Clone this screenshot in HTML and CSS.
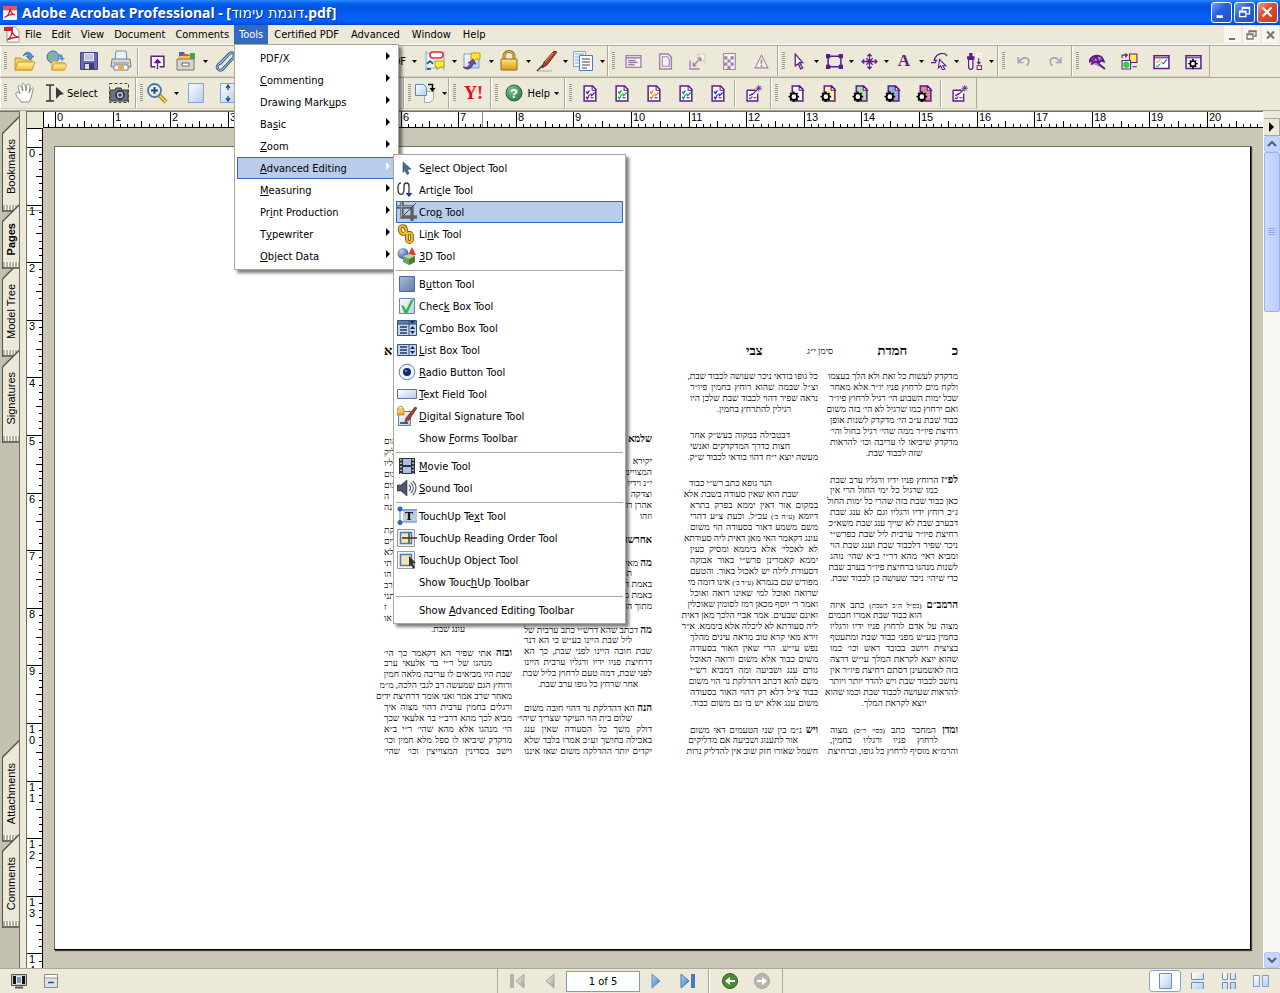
FILE: index.html
```
<!DOCTYPE html>
<html lang="en">
<head>
    <meta charset="UTF-8">
    <meta name="viewport" content="width=device-width, initial-scale=1.0">
    <title>Adobe Acrobat Professional - [דוגמת עימוד.pdf]</title>
    <link rel="stylesheet" href="styles.css">
</head>
<body>
    <!-- Shared icons -->
    <svg class="sprite" aria-hidden="true">
        <defs>
            <linearGradient id="gFolder" x1="0" y1="0" x2="0" y2="1"><stop offset="0" stop-color="#fff3a8"/><stop offset="1" stop-color="#f2bf3a"/></linearGradient>
            <linearGradient id="gBlue" x1="0" y1="0" x2="1" y2="1"><stop offset="0" stop-color="#fff"/><stop offset="1" stop-color="#b4cdec"/></linearGradient>
            <linearGradient id="gSteel" x1="0" y1="0" x2="1" y2="1"><stop offset="0" stop-color="#a9bddb"/><stop offset="1" stop-color="#5f7ca8"/></linearGradient>
            <linearGradient id="gGold" x1="0" y1="0" x2="0" y2="1"><stop offset="0" stop-color="#ffe683"/><stop offset="1" stop-color="#d99b12"/></linearGradient>
            <linearGradient id="gGray" x1="0" y1="0" x2="1" y2="1"><stop offset="0" stop-color="#f2f2ee"/><stop offset="1" stop-color="#a3a39c"/></linearGradient>
            <linearGradient id="gNav" x1="0" y1="0" x2="1" y2="1"><stop offset="0" stop-color="#b9daf5"/><stop offset="1" stop-color="#2f78bd"/></linearGradient>
            <radialGradient id="gBall" cx=".35" cy=".3" r=".8"><stop offset="0" stop-color="#b8cdf0"/><stop offset="1" stop-color="#2a4f94"/></radialGradient>
            <radialGradient id="gGreen" cx=".35" cy=".3" r=".8"><stop offset="0" stop-color="#7fc38c"/><stop offset="1" stop-color="#2c7440"/></radialGradient>
        </defs>
        <symbol id="folder" viewBox="0 0 22 22">
            <path d="M1 8h6l2 2h9v10H1z" fill="#f3cf5c" stroke="#c79a2c"/>
            <path d="M1 20l3-8h17l-3 8z" fill="url(#gFolder)" stroke="#c79a2c"/>
        </symbol>
        <symbol id="doccheck" viewBox="0 0 16 16">
            <path d="M2 1h8l3 3v11H2z" fill="#fff" stroke="#5c1a8e" stroke-width="1.4"/>
            <path d="M9.500 1v4h4" fill="none" stroke="#5c1a8e"/>
            <path d="M4 6l1 2 2-3M4 11l1 2 2-4M8 8l1 2 3-3" fill="none" stroke="currentColor" stroke-width="1.3"/>
            <path d="M8 12h3" stroke="#5c1a8e"/>
        </symbol>
        <symbol id="docgear" viewBox="0 0 16 16">
            <path d="M4 1h7l3 3v11H4z" fill="currentColor" stroke="#5c1a8e" stroke-width="1.4"/>
            <path d="M10.500 1v4h4z" fill="#fff" stroke="#5c1a8e"/>
            <circle cx="5.500" cy="11" r="3" fill="#fff" stroke="#000" stroke-width="1.600"/>
            <path d="M5.500 6v2M5.500 14v2M.5 11h2M8.500 11h2M2 7.500l1 1M9 7.500l-1 1M2 14.500l1-1M9 14.500l-1-1" stroke="#000" stroke-width="1.600"/>
        </symbol>
        <symbol id="down" viewBox="0 0 5 3"><path d="M0 0h5L2.500 3z"/></symbol>
        <symbol id="magic" viewBox="0 0 16 16">
            <path d="M1 5h8M11 8v7H1V5" fill="#fff" stroke="#5c1a8e" stroke-width="1.300"/>
            <path d="M3 9l1 1 2-2M3 12l1 1 2-2M7 12h3M6 9l5-5" fill="none" stroke="#5c1a8e"/>
            <path d="M12 0v6M9 3h6M10 1l4 4M14 1l-4 4" stroke="#5c1a8e" stroke-width=".8"/>
        </symbol>
    </svg>

    <header class="titlebar">
        <svg class="app-icon" viewBox="0 0 16 16"><rect width="16" height="16" rx="1" fill="#f6f3f6"/><path d="M0 0h16v5H0z" fill="#dc5a63"/><path d="M2 13c4-2 6-6 6-10 1 5 3 7 6 7-4-1-8 0-12 3z" fill="none" stroke="#c4202c" stroke-width="1.400"/></svg>
        <h1>Adobe Acrobat Professional - [<span dir="rtl">דוגמת עימוד</span>.pdf]</h1>
        <div class="window-buttons">
            <button aria-label="Minimize"><svg viewBox="0 0 21 21"><path d="M5 15h7" stroke="#fff" stroke-width="3"/></svg></button>
            <button aria-label="Restore"><svg viewBox="0 0 21 21"><path d="M8 8V5h8v7h-3M8 6h8M5 9h7v6H5zM5 10h7" fill="none" stroke="#fff" stroke-width="1.500"/></svg></button>
            <button class="close" aria-label="Close"><svg viewBox="0 0 21 21"><path d="M5 5l10 10M15 5L5 15" stroke="#fff" stroke-width="2.300"/></svg></button>
        </div>
    </header>

    <nav class="menubar">
        <svg class="doc-icon" viewBox="0 0 16 17"><path d="M3 1h8l4 4v11H3z" fill="#fff" stroke="#999"/><path d="M0 1h9v4H0z" fill="#d3202a"/><path d="M3 14c4-2 5-5 5-9 1 4 3 6 7 6-5 0-8 1-12 3z" fill="none" stroke="#d3202a" stroke-width="1.300"/></svg>
        <ul class="menus">
            <li><button>File</button></li>
            <li><button>Edit</button></li>
            <li><button>View</button></li>
            <li><button>Document</button></li>
            <li><button>Comments</button></li>
            <li class="open"><button>Tools</button>
                <ul class="menu tools-menu">
                    <li><button>PDF/X</button></li>
                    <li><button><u>C</u>ommenting</button></li>
                    <li><button>Drawing Mark<u>u</u>ps</button></li>
                    <li><button>Ba<u>s</u>ic</button></li>
                    <li><button><u>Z</u>oom</button></li>
                    <li class="selected"><button><u>A</u>dvanced Editing</button>
                        <ul class="menu submenu">
                            <li><button><svg viewBox="0 0 20 20"><path d="M6 4l8 7-4 .500 2 4-2 1-2-4-2 2z" fill="#3f6f96" stroke="#26455f" stroke-width=".6"/></svg><span>S<u>e</u>lect Object Tool</span></button></li>
                            <li><button><svg viewBox="0 0 20 20"><path d="M4 3C1 3 1 6 1 9c0 7 6 7 6 1V6c0-4 5-4 5 0v8" fill="none" stroke="#333" stroke-width="1.300"/><path d="M8.500 13h7L12 17z" fill="#1f3a9c"/></svg><span>Arti<u>c</u>le Tool</span></button></li>
                            <li class="selected"><button><svg viewBox="0 0 20 20"><path d="M0 5h15v14M5 0v15h15" fill="none" stroke="#5b6068" stroke-width="3.400"/><path d="M0 4.500h15.500M4.500 0v15" stroke="#a4a8ae" fill="none"/><path d="M7 13l12-12" stroke="#444" stroke-width="1"/></svg><span>Cro<u>p</u> Tool</span></button></li>
                            <li><button><svg viewBox="0 0 20 20"><g fill="none"><g stroke="#7d5700" stroke-width="3.800"><rect x="3" y="2" width="6" height="8" rx="3" transform="rotate(-20 6 6)"/><rect x="10" y="9" width="5" height="9" rx="2.500"/></g><g stroke="#f2bd2b" stroke-width="2"><rect x="3" y="2" width="6" height="8" rx="3" transform="rotate(-20 6 6)"/><rect x="10" y="9" width="5" height="9" rx="2.500"/></g><path d="M7 8l4 2" stroke="#f2bd2b" stroke-width="2.500"/></g></svg><span>Li<u>n</u>k Tool</span></button></li>
                            <li><button><svg viewBox="0 0 20 20"><path d="M15 1l4 8h-8z" fill="#e23b2e"/><circle cx="6" cy="7.500" r="5.500" fill="url(#gBall)"/><path d="M6 10l7-2 5 2v6l-6 3-6-3z" fill="#6f9f5c"/><path d="M6 10l7-2 5 2-6 3z" fill="#b5d69e"/><path d="M12 13v6l6-3v-6z" fill="#4c7b3d"/></svg><span><u>3</u>D Tool</span></button></li>
                            <li class="line" role="separator"></li>
                            <li><button><svg viewBox="0 0 20 20"><path d="M2.500 2.500h15v15h-15z" fill="url(#gSteel)" stroke="#4d6a94"/></svg><span>B<u>u</u>tton Tool</span></button></li>
                            <li><button><svg viewBox="0 0 20 20"><path d="M2.500 2.500h15v15h-15z" fill="url(#gBlue)" stroke="#6b87ad"/><path d="M4 9l3 1 2 4 5-10 3-1-7 15H8z" fill="#35b53c"/></svg><span>Chec<u>k</u> Box Tool</span></button></li>
                            <li><button><svg viewBox="0 0 20 20"><path d="M.5 2.500h19v15H.5z" fill="#c4d6ee" stroke="#32527f"/><path d="M1 3h18v3H1z" fill="#5f7fac"/><path d="M13 3h5l-2.500 3z" fill="#13294d"/><path d="M12 3v14M1 6h18" stroke="#32527f"/><path d="M3 9h7M3 12h7M3 15h7" stroke="#1e3a66" stroke-width="1.300"/><path d="M13 11l2.500-3 2.500 3zM13 13h5l-2.500 3z" fill="#13294d"/></svg><span>C<u>o</u>mbo Box Tool</span></button></li>
                            <li><button><svg viewBox="0 0 20 20"><path d="M.5 4.500h19v11H.5z" fill="#c4d6ee" stroke="#32527f"/><path d="M12 5v10" stroke="#32527f"/><path d="M3 7h7M3 10h7M3 13h7" stroke="#1e3a66" stroke-width="1.300"/><path d="M13 9l2.500-3 2.500 3zM13 11h5l-2.500 3z" fill="#13294d"/></svg><span><u>L</u>ist Box Tool</span></button></li>
                            <li><button><svg viewBox="0 0 20 20"><circle cx="10" cy="10" r="7.800" fill="#eef4fc" stroke="#6482b5"/><circle cx="10" cy="10" r="4" fill="#12277a"/><circle cx="9" cy="9" r="1.300" fill="#5f7fd0"/></svg><span><u>R</u>adio Button Tool</span></button></li>
                            <li><button><svg viewBox="0 0 20 20"><path d="M.5 5.500h19v9H.5z" fill="url(#gBlue)" stroke="#5f7694"/></svg><span><u>T</u>ext Field Tool</span></button></li>
                            <li><button><svg viewBox="0 0 20 20"><path d="M1.500 5.500h12v14h-12z" fill="url(#gBlue)" stroke="#4b83c9"/><path d="M1 3V2c0-2 5-2 5 0v2" fill="none" stroke="#a87b0c"/><path d="M0 3h7v6H0z" fill="url(#gGold)" stroke="#a87b0c" stroke-width=".6"/><path d="M18 1l2 1-8 12-4 2 1-4z" fill="#a8402a" stroke="#5f1c10" stroke-width=".6"/><path d="M3 17h8" stroke="#000" stroke-width="1.200"/></svg><span><u>D</u>igital Signature Tool</span></button></li>
                            <li><button class="plain">Show <u>F</u>orms Toolbar</button></li>
                            <li class="line" role="separator"></li>
                            <li><button><svg viewBox="0 0 20 20"><path d="M2 2h16v16H2z" fill="#30343a"/><path d="M6 3h8v6H6zM6 11h8v6H6z" fill="#a9c1e4"/><path d="M4 3v15M16 3v15" stroke="#ddd" stroke-width="1.500" stroke-dasharray="1.500 2"/></svg><span><u>M</u>ovie Tool</span></button></li>
                            <li><button><svg viewBox="0 0 20 20"><path d="M0 7h4l6-5v16l-6-5H0z" fill="#4d5468" stroke="#2b3040" stroke-width=".6"/><path d="M12 7c2 2 2 4 0 6M14 5c3 3 3 7 0 10M16 3c4 4 4 10 0 14" fill="none" stroke="#555b6b" stroke-width="1.200"/></svg><span><u>S</u>ound Tool</span></button></li>
                            <li class="line" role="separator"></li>
                            <li><button><svg viewBox="0 0 20 20"><path d="M6 3h14v13H6z" fill="#bccce4"/><path d="M3 2v15M2 4h18M2 16h18" stroke="#4e82cc"/><circle cx="3" cy="3" r="2.500" fill="#2f66bd"/><circle cx="3" cy="16.500" r="2.500" fill="#2f66bd"/><text x="8" y="14" class="t-glyph">T</text></svg><span>TouchUp Te<u>x</u>t Tool</span></button></li>
                            <li><button><svg viewBox="0 0 20 20"><path d="M.5 1.500h17v17H.5z" fill="#f4f4f2" stroke="#999"/><path d="M3.500 4.500h11v11h-11z" fill="#f7e6a4" stroke="#4b78c4" stroke-width="1.500"/><path d="M5 10h15M12 5v10" stroke="#333" stroke-width="1.300"/></svg><span>TouchUp Readin<u>g</u> Order Tool</span></button></li>
                            <li><button><svg viewBox="0 0 20 20"><path d="M.5 1.500h17v17H.5z" fill="#f4f4f2" stroke="#999"/><path d="M3.500 4.500h11v11h-11z" fill="#f7e6a4" stroke="#4b78c4" stroke-width="1.500"/><path d="M12 6l7 7-3 .500 2 4-2 1-2-4-2 2z" fill="#333"/></svg><span>TouchUp Ob<u>j</u>ect Tool</span></button></li>
                            <li><button class="plain">Show Touc<u>h</u>Up Toolbar</button></li>
                            <li class="line" role="separator"></li>
                            <li><button class="plain">Show <u>A</u>dvanced Editing Toolbar</button></li>
                        </ul>
                    </li>
                    <li><button><u>M</u>easuring</button></li>
                    <li><button>Pr<u>i</u>nt Production</button></li>
                    <li><button>T<u>y</u>pewriter</button></li>
                    <li><button><u>O</u>bject Data</button></li>
                </ul>
            </li>
            <li><button>Certified PDF</button></li>
            <li><button>Advanced</button></li>
            <li><button>Window</button></li>
            <li><button>Help</button></li>
        </ul>
        <div class="child-buttons">
            <button aria-label="Minimize document"><svg viewBox="0 0 16 16"><path d="M5 12h6" stroke="#77756a" stroke-width="2"/></svg></button>
            <button aria-label="Restore document"><svg viewBox="0 0 16 16"><path d="M6 6V4h7v5h-2M6 4.500h7M4 7h6v5H4zM4 7.500h6" fill="none" stroke="#77756a" stroke-width="1.300"/></svg></button>
            <button aria-label="Close document"><svg viewBox="0 0 16 16"><path d="M5 4.500l7 7M12 4.500l-7 7" stroke="#77756a" stroke-width="2"/></svg></button>
        </div>
    </nav>

    <section class="toolbars">
        <div class="toolbar-row">
            <div class="band file-band">
                <button aria-label="Open"><svg viewBox="0 0 22 22"><use href="#folder"/><path d="M9 6c2-5 8-5 9 0h2l-4 4-4-4h3c-1-2-3-2-6 0z" fill="#5b8fce" stroke="#2c5b96" stroke-width=".6"/></svg></button>
                <button aria-label="Open web page"><svg viewBox="0 0 22 22"><circle cx="7" cy="7" r="6" fill="#7fa8d8" stroke="#3d6a9f"/><path d="M3 4c3-2 4 2 3 4S2 9 2 7zM8 2l4 2-2 3z" fill="#7dbb72"/><g transform="translate(5 5) scale(.75)"><use href="#folder" width="22" height="22"/></g><path d="M12 5c3-2 5 0 5 3h2l-3 3-3-3h2z" fill="#5b8fce"/></svg></button>
                <button aria-label="Save"><svg viewBox="0 0 22 22"><path d="M2.500 2.500h17v17h-17z" fill="#6a6bb5" stroke="#44458c"/><path d="M6 3h10v8H6z" fill="#e3e6f5"/><path d="M7 5h8M7 7h8M7 9h8" stroke="#9ea3cc"/><path d="M6 13h10v6H6z" fill="#3c3d74"/><path d="M7 14h4v5H7z" fill="#d8d8e8"/></svg></button>
                <button aria-label="Print"><svg viewBox="0 0 22 22"><path d="M6 1h10l1 9H5z" fill="#eaf1fb" stroke="#7a8ca8"/><path d="M2 9h18l1 8H1z" fill="#d6d8dc" stroke="#777c86"/><path d="M3 13h16" stroke="#888"/><path d="M4 15h14v5H4z" fill="#fff" stroke="#777c86"/><path d="M8 16h6v3H8z" fill="#e9ad3a"/></svg></button>
                <span class="split"></span>
                <button aria-label="Upload"><svg class="small" viewBox="0 0 16 16"><path d="M6 13H2V3h12v10h-4" fill="#fff" stroke="#5c1a8e" stroke-width="1.400"/><path d="M8 15V7M5.500 9L8 6l2.500 3z" fill="#5c1a8e" stroke="#5c1a8e" stroke-width="1.200"/></svg></button>
                <button class="drop" aria-label="Organizer"><svg viewBox="0 0 22 22"><path d="M4 2h5l1 2h3v6H4z" fill="#3a68c8"/><path d="M8 4h5l1 1h5v5H8z" fill="#e4572e"/><path d="M3 6h14v4H3z" fill="#f5c73a"/><path d="M15 3h5v6h-5z" fill="#44a448"/><path d="M2 9h17v11H2z" fill="#d8d5c8" stroke="#77746a"/><path d="M7 13h7v3H7z" fill="#fff" stroke="#666"/></svg><svg class="arrow"><use href="#down"/></svg></button>
                <button aria-label="Attach"><svg viewBox="0 0 22 22"><path d="M5 14L14 4c3-3 7 1 4 4L8 19c-3 3-8-1-5-4L13 5" fill="none" stroke="#3c6291" stroke-width="2.800"/><path d="M5 14L14 4c3-3 7 1 4 4L8 19c-3 3-8-1-5-4L13 5" fill="none" stroke="#a9cdf0" stroke-width="1"/></svg></button>
                <button class="label-button create">Create PDF<svg class="arrow"><use href="#down"/></svg></button>
                <button class="drop" aria-label="Comment and markup"><svg viewBox="0 0 22 22"><path d="M3 3h16v16H3z" fill="#f1f6fd"/><path d="M2 1v20M20 1v20M2 3h18M2 12h18M2 18h18" stroke="#7fb1e6"/><rect x="6" y="2" width="13" height="6" rx="3" fill="#fff" stroke="#df3030" stroke-width="1.500"/><path d="M3 14l3-3 3 3M3 19h4" fill="none" stroke="#17406f" stroke-width="1.300"/><path d="M11 11h9v6h-4l-3 3v-3h-2z" fill="#ffe83c" stroke="#c79b00"/></svg><svg class="arrow"><use href="#down"/></svg></button>
                <button class="drop" aria-label="Send for review"><svg viewBox="0 0 22 22"><path d="M3 4h15v14H3z" fill="url(#gBlue)" stroke="#7c9bc6"/><path d="M10 3h9v6h-4l-3 3V9h-2z" fill="#ffe83c" stroke="#c79b00"/><path d="M2 17c4 1 7-1 7-4H7l5-4 3 5h-3c-1 5-6 7-10 3z" fill="#6b4b9c" stroke="#44266f" stroke-width=".6"/></svg><svg class="arrow"><use href="#down"/></svg></button>
                <button class="drop" aria-label="Secure"><svg viewBox="0 0 22 22"><path d="M6 10V6c0-6 10-6 10 0v4" fill="none" stroke="#98741a" stroke-width="3"/><path d="M6 10V6c0-6 10-6 10 0v4" fill="none" stroke="#e9c65a" stroke-width="1"/><path d="M3 9h16v11H3z" fill="url(#gGold)" stroke="#9a6f05"/></svg><svg class="arrow"><use href="#down"/></svg></button>
                <button class="drop" aria-label="Sign"><svg viewBox="0 0 22 22"><path d="M19 1l3 1-10 13-5 3 2-6z" fill="#b3402b" stroke="#571a0f" stroke-width=".8"/><path d="M8 15L2 21" stroke="#333" stroke-width="1.500"/><path d="M10 12L18 3" stroke="#e4937e"/><path d="M3 21h14" stroke="#aaa"/></svg><svg class="arrow"><use href="#down"/></svg></button>
                <button class="drop" aria-label="Forms"><svg viewBox="0 0 22 22"><path d="M1.500 1.500h12v15h-12z" fill="#edf4fc" stroke="#83a9d6"/><path d="M3 4h9M3 7h9M3 10h9M3 13h9" stroke="#83a9d6"/><path d="M7.500 5.500h13v15h-13z" fill="#fff" stroke="#4b7cb5"/><path d="M10 9h8M10 12h8M10 15h8M10 18h5" stroke="#444"/></svg><svg class="arrow"><use href="#down"/></svg></button>
            </div>
            <div class="band dim">
                <button aria-label="Output preview"><svg class="small" viewBox="0 0 16 16"><path d="M1 2.500h14v11H1z" fill="#fff" stroke="#5c1a8e" stroke-width="1.300"/><path d="M1 4.500h14M3 7h7M3 9h9M3 11h6" stroke="#5c1a8e" stroke-width="1.300"/></svg></button>
                <button aria-label="Page boxes"><svg class="small" viewBox="0 0 16 16"><path d="M2.500 1h8l3 3v11h-11z" fill="#fff" stroke="#5c1a8e" stroke-width="1.400"/><path d="M5 3.500h5l1.500 2v7H5z" fill="none" stroke="#5c1a8e"/></svg></button>
                <button aria-label="Scale"><svg class="small" viewBox="0 0 16 16"><path d="M8 1h7v8l-3-3z" fill="#fff" stroke="#b9b3a5"/><path d="M1 7v8h9M4 12l7-7M4 9v3h3M8 5h3v3" fill="none" stroke="#5c1a8e" stroke-width="1.300"/></svg></button>
                <button aria-label="Flatten"><svg class="small" viewBox="0 0 16 16"><path d="M2.500.5h11v15h-11z" fill="#fff" stroke="#5c1a8e"/><path d="M3 3h3v3h3V3h3v3h-3v3H6V6H3zM3 9h3v3h3V9h3v3H9v3H6v-3H3z" fill="#5c1a8e"/></svg></button>
                <button aria-label="Trap presets"><svg class="small" viewBox="0 0 16 16"><path d="M8 2l6 12H2z" fill="#fff" stroke="#5c1a8e"/><path d="M8 6v4M8 11v2" stroke="#333" stroke-width="1.500"/></svg></button>
            </div>
            <div class="band">
                <button class="drop" aria-label="Select object"><svg class="small" viewBox="0 0 16 16"><path d="M4 1l7 8H8l3 5-2 1-2-5-3 2z" fill="#fff" stroke="#5c1a8e" stroke-width="1.200"/></svg><svg class="arrow"><use href="#down"/></svg></button>
                <button class="drop" aria-label="Rectangle"><svg class="small" viewBox="0 0 16 16"><path d="M2 3h12v10H2z" fill="none" stroke="#5c1a8e" stroke-width="1.400"/><path d="M0 1h4v4H0zM12 1h4v4h-4zM0 11h4v4H0zM12 11h4v4h-4z" fill="#5c1a8e"/></svg><svg class="arrow"><use href="#down"/></svg></button>
                <button class="drop" aria-label="Move"><svg class="small" viewBox="0 0 16 16"><path d="M8 1v14M1 8h14M6 3l2-2 2 2M6 13l2 2 2-2M3 6L1 8l2 2M13 6l2 2-2 2M5 5l6 6M11 5l-6 6" fill="none" stroke="#5c1a8e" stroke-width="1.200"/></svg><svg class="arrow"><use href="#down"/></svg></button>
                <button class="drop" aria-label="Edit text"><span class="letter">A</span><svg class="arrow"><use href="#down"/></svg></button>
                <button class="drop" aria-label="Edit path"><svg class="small" viewBox="0 0 16 16"><path d="M0 9h4l1-2H3c2-8 11-8 12-4" fill="none" stroke="#5c1a8e" stroke-width="1.200"/><path d="M8 6l6 6h-3l2 3-2 1-2-4-2 2z" fill="#fff" stroke="#5c1a8e"/></svg><svg class="arrow"><use href="#down"/></svg></button>
                <button class="drop" aria-label="Eyedropper"><svg class="small" viewBox="0 0 16 16"><path d="M3 0h3v3h2v3H1V3h2z" fill="#5c1a8e"/><path d="M2.500 6h4v8l-2 2-2-2z" fill="#fff" stroke="#5c1a8e" stroke-width="1.200"/><path d="M12 5v5M10.500 8.500l1.500 2 1.500-2M10.500 12h4v3.500h-4z" fill="#fff" stroke="#5c1a8e"/><path d="M10.500.5h4v3h-4z" fill="none" stroke="#fff"/></svg><svg class="arrow"><use href="#down"/></svg></button>
            </div>
            <div class="band dim">
                <button aria-label="Undo"><svg class="small" viewBox="0 0 16 16"><path d="M4 8c3-5 9-4 9 0 0 2-1 3-2 4M3 4v5h5" fill="none" stroke="#77558e" stroke-width="1.500"/></svg></button>
                <button aria-label="Redo"><svg class="small" viewBox="0 0 16 16"><path d="M12 8C9 3 3 4 3 8c0 2 1 3 2 4M13 4v5H8" fill="none" stroke="#77558e" stroke-width="1.500"/></svg></button>
            </div>
            <div class="band last">
                <button aria-label="Inspect"><svg class="small" viewBox="0 0 16 16"><path d="M0 9C2 1 12 0 14 8l-3-1-2 3 6 5M2 8l5-5 2 6-4-1-3 3" fill="#b08bcc" stroke="#5c1a8e" stroke-width="1.800"/></svg></button>
                <button aria-label="Compare"><svg class="small" viewBox="0 0 16 16"><path d="M8 1h7v8H8z" fill="#ffee44" stroke="#5c1a8e"/><path d="M1 7h8v8H1z" fill="#fff" stroke="#5c1a8e"/><circle cx="5" cy="11" r="3" fill="#27d63a"/><path d="M1 5V2h5M4 .5L6 2 4 4M11 13h4" fill="none" stroke="#5c1a8e"/></svg></button>
                <button aria-label="Preflight"><svg class="small" viewBox="0 0 16 16"><path d="M1 2.500h14v12H1z" fill="#fff" stroke="#5c1a8e" stroke-width="1.400"/><path d="M1 4.500h14" stroke="#5c1a8e"/><path d="M3 8l1 1 3-3" fill="none" stroke="#f0a030"/><path d="M3 12l1 1 3-3" fill="none" stroke="#30b040"/><path d="M8 9l2 1 3-4" fill="none" stroke="#3050d0"/></svg></button>
                <button aria-label="Settings"><svg class="small" viewBox="0 0 16 16"><path d="M1 2.500h14v12H1z" fill="#fff" stroke="#5c1a8e" stroke-width="1.400"/><path d="M1 4.500h14" stroke="#5c1a8e"/><circle cx="7.500" cy="10" r="2.500" fill="#fff" stroke="#000" stroke-width="1.500"/><path d="M7.500 5.500v2M7.500 12v3M3 10h2M10 10h2M4.500 7l1 1M10.500 7l-1 1M4.500 13l1-1M10.500 13l-1-1" stroke="#000" stroke-width="1.400"/></svg></button>
            </div>
        </div>
        <div class="toolbar-row">
            <div class="band">
                <button aria-label="Hand"><svg viewBox="0 0 22 22"><path d="M7 20C5 17 1 13 2 11s3 0 4 1L4 5c0-2 2-2 3 0l2 4-1-6c0-2 2-2 3 0l1 6 1-6c1-2 3-1 3 1l-1 7 2-4c1-2 3-1 2 1l-2 8-2 4z" fill="#fff" stroke="#8b8b8b"/></svg></button>
                <button class="label-button select-tool"><svg viewBox="0 0 20 20"><path d="M1 2h3c1 0 1 1 1 1s0-1 1-1h3M5 3v14M1 18h3c1 0 1-1 1-1s0 1 1 1h3" fill="none" stroke="#333" stroke-width="1.500"/><path d="M11 4l8 7-4 1-4 4z" fill="#3b3b3b"/></svg>Select</button>
                <button aria-label="Snapshot"><svg viewBox="0 0 22 22"><path d="M1.500 1.500h19v19h-19z" fill="none" stroke="#444" stroke-dasharray="3 2"/><path d="M2 8h5l1-2h5l1 2h6v11H2z" fill="#70747c" stroke="#33363c"/><circle cx="12" cy="13" r="4" fill="#b9cbe6" stroke="#22252b" stroke-width="1.500"/><circle cx="12" cy="13" r="1.800" fill="#28436f"/></svg></button>
            </div>
            <div class="band zoom-band">
                <button class="drop" aria-label="Zoom in"><svg viewBox="0 0 22 22"><path d="M12 12l8 8" stroke="#b9871d" stroke-width="4"/><path d="M12 12l8 8" stroke="#ffd56d" stroke-width="1.500"/><circle cx="8.500" cy="8.500" r="6.500" fill="#e5f0fc" stroke="#4d78ad" stroke-width="1.800"/><path d="M5 8.500h7M8.500 5v7" stroke="#24497d" stroke-width="2"/></svg><svg class="arrow"><use href="#down"/></svg></button>
                <button aria-label="Actual size"><svg viewBox="0 0 22 22"><path d="M3.500 1.500h15v19h-15z" fill="url(#gBlue)" stroke="#7fa6d6"/></svg></button>
                <button aria-label="Fit page"><svg viewBox="0 0 22 22"><path d="M3.500 1.500h15v19h-15z" fill="url(#gBlue)" stroke="#7fa6d6"/><path d="M11 3v5M9 6l2-3 2 3M11 19v-5M9 16l2 3 2-3" fill="none" stroke="#24497d" stroke-width="1.300"/></svg></button>
            </div>
            <div class="band">
                <button class="drop" aria-label="Rotate"><svg viewBox="0 0 22 22"><path d="M10.500 9.500h9v8l-4 3h-5z" fill="#f5f5f2" stroke="#aaa"/><path d="M1.500 2.500h8l3 3v8h-11z" fill="url(#gBlue)" stroke="#5e88bb"/><path d="M14 2.500h4.500V7" fill="none" stroke="#000" stroke-width="1.500"/><path d="M15.500 6h6l-3 4z"/></svg><svg class="arrow"><use href="#down"/></svg></button>
            </div>
            <div class="band"><button class="yahoo">Y!</button></div>
            <div class="band">
                <button class="label-button"><svg viewBox="0 0 20 20"><circle cx="10" cy="10" r="8" fill="url(#gGreen)" stroke="#2f6a3d"/><text x="6" y="15" class="q-glyph">?</text></svg>Help<svg class="arrow"><use href="#down"/></svg></button>
            </div>
            <div class="band">
                <button aria-label="Certify"><svg class="small c-purple"><use href="#doccheck"/></svg></button>
                <button aria-label="Certify green"><svg class="small c-green"><use href="#doccheck"/></svg></button>
                <button aria-label="Certify orange"><svg class="small c-orange"><use href="#doccheck"/></svg></button>
                <button aria-label="Certify teal"><svg class="small c-teal"><use href="#doccheck"/></svg></button>
                <button aria-label="Certify blue"><svg class="small c-blue"><use href="#doccheck"/></svg></button>
                <span class="split"></span>
                <button aria-label="New check"><svg class="small"><use href="#magic"/></svg></button>
            </div>
            <div class="band last">
                <button aria-label="Process"><svg class="small c-white"><use href="#docgear"/></svg></button>
                <button aria-label="Process yellow"><svg class="small c-yellow"><use href="#docgear"/></svg></button>
                <button aria-label="Process green"><svg class="small c-lime"><use href="#docgear"/></svg></button>
                <button aria-label="Process blue"><svg class="small c-steel"><use href="#docgear"/></svg></button>
                <button aria-label="Process red"><svg class="small c-rose"><use href="#docgear"/></svg></button>
                <span class="split"></span>
                <button aria-label="New process"><svg class="small"><use href="#magic"/></svg></button>
            </div>
        </div>
    </section>

    <main class="workspace">
        <aside class="side-tabs">
            <button><span>Bookmarks</span></button>
            <button class="active"><span>Pages</span></button>
            <button><span>Model Tree</span></button>
            <button><span>Signatures</span></button>
            <i class="push"></i>
            <button class="first"><span>Attachments</span></button>
            <button class="over"><span>Comments</span></button>
        </aside>
        <div class="splitter"></div>
        <div class="view">
            <div class="corner"></div>
            <svg class="ruler-h" id="ruler-h"></svg>
            <svg class="ruler-v" id="ruler-v"></svg>
            <div class="canvas">
                <article class="page" lang="he" dir="rtl">
                    <div class="sheet">
                        <div class="sheet-head"><b>כ</b><b>חמדת</b><span>סימן י״ג</span><b>צבי</b></div>
                        <div class="columns">
                            <div class="column">
                                <div class="para">
                                    <p>מדקדק לעשות כל זאת ולא הלך בעצמו</p>
                                    <p>ולקח מים לרחוץ פניו יו״ר אלא מאחר</p>
                                    <p>שכל ימות השבוע הי׳ רגיל לרחוץ פיו״ר</p>
                                    <p>ואם ירחוץ כמו שרגיל לא הי׳ בזה משום</p>
                                    <p>כבוד שבת ע״כ הי׳ מדקדק לשנות אופן</p>
                                    <p>רחיצת פיו״ר ממה שהי׳ רגיל בחול והי׳</p>
                                    <p>מדקדק שיביאו לו עריבה וכו׳ להראות</p>
                                    <p class="end">שזה לכבוד שבת.</p>
                                </div>
                                <div class="para">
                                    <p><b>לפ״ז</b> הרוחץ פניו ידיו ורגליו ערב שבת</p>
                                    <p class="in">כמו שרגיל כל ימי החול הרי אין</p>
                                    <p>כאן כבוד שבת בזה שהרי כל ימות החול</p>
                                    <p>ג״כ רוחץ ידיו ורגליו וגם לא ענג שבת</p>
                                    <p>דבערב שבת לא שייך ענג שבת משא״כ</p>
                                    <p>רחיצת פיו״ר ערבית ליל שבת כפרש״י</p>
                                    <p>ניכר שפיר דלכבוד שבת וענג שבת הוי</p>
                                    <p>ומביא ראי׳ מהא דר״י ב״א שהי׳ נוהג</p>
                                    <p>לשנות מנהגו ברחיצת פיו״ר בערב שבת</p>
                                    <p>כדי שיהי׳ ניכר שעושה כן לכבוד שבת.</p>
                                </div>
                                <div class="para">
                                    <p><b>הרמב״ם</b> <small>(בפ״ל ה״ב דשבת)</small> כתב איזה</p>
                                    <p class="in wide">הוא כבוד שבת אמרו חכמים</p>
                                    <p>מצוה על אדם לרחוץ פניו ידיו ורגליו</p>
                                    <p>בחמין בע״ש מפני כבוד שבת ומתעטף</p>
                                    <p>בציצית ויושב בכובד ראש וכו׳ כמו</p>
                                    <p>שהוא יוצא לקראת המלך עי״ש דרצה</p>
                                    <p>בזה לאשמעינן דסתם רחיצת פיו״ר אין</p>
                                    <p>נחשב לכבוד שבת ויש להדר יותר ויותר</p>
                                    <p>להראות שעושה לכבוד שבת וכמו שהוא</p>
                                    <p class="end">יוצא לקראת המלך.</p>
                                </div>
                                <div class="para">
                                    <p><b>ומדן</b> המחבר כתב <small>(בסי׳ ר״ס)</small> מצוה</p>
                                    <p class="in">לרחוץ פניו ורגליו בחמין,</p>
                                    <p>והרמ״א מוסיף לרחוץ כל גופו, וברחיצת</p>
                                </div>
                            </div>
                            <div class="column">
                                <div class="para">
                                    <p>כל גופו בודאי ניכר שעושה לכבוד שבת,</p>
                                    <p>וצ״ל שבמה שהוא רוחץ בחמין פיו״ר</p>
                                    <p>נראה שפיר דהוי לכבוד שבת שלכן היו</p>
                                    <p class="end">רגילין להתרחץ בחמין.</p>
                                </div>
                                <div class="para">
                                    <p class="in mid">דבטבילה במקוה בעש״ק אחר</p>
                                    <p class="in mid">חצות כדרך המדקדקים ואנשי</p>
                                    <p>מעשה יוצא י״ח דהוי בודאי לכבוד ש״ק.</p>
                                </div>
                                <div class="para">
                                    <p class="in widest">הנר גופא כתב רש״י כבוד</p>
                                    <p class="in">שבת הוא שאין סעודה בשבת אלא</p>
                                    <p>במקום אור דאין יממא בפרק בתרא</p>
                                    <p>דיומא <small>(ע״ה ב׳)</small> עכ״ל. וכעת צ״ע דהרי</p>
                                    <p>משם משמע דאור בסעודה הוי משום</p>
                                    <p>עונג דקאמר האי מאן דאית ליה סעודתא</p>
                                    <p>לא לאכלי׳ אלא ביממא ומסיק כעין</p>
                                    <p>יממא קאמרינן פרש״י באור אבוקה</p>
                                    <p>דסעודת לילה יש לאכול באור. והטעם</p>
                                    <p>מפורש שם בגמרא <small>(ע״ד ב׳)</small> אינו דומה מי</p>
                                    <p>שרואה ואוכל למי שאינו רואה ואוכל</p>
                                    <p>ואמר ר׳ יוסף מכאן רמז לסומין שאוכלין</p>
                                    <p>ואינם שבעים. אמר אביי הלכך מאן דאית</p>
                                    <p>ליה סעודתא לא ליכלה אלא ביממא. א״ר</p>
                                    <p>זירא מאי קרא טוב מראה עינים מהלך</p>
                                    <p>נפש עי״ש. הרי שאין האור בסעודה</p>
                                    <p>משום כבוד אלא משום ורואה האוכל</p>
                                    <p>גורם ענג ושביעה ומה דמביא רש״י</p>
                                    <p>משם להא דכתב דהדלקת נר הוי משום</p>
                                    <p>כבוד צ״ל דלא רק דהוי האור בסעודה</p>
                                    <p>משום ענג אלא יש בו גם משום כבוד.</p>
                                </div>
                                <div class="para">
                                    <p><b>ויש</b> נ״מ בין שני הטעמים דאי משום</p>
                                    <p class="in">אור לתענוג ושביעה אם מדליקים</p>
                                    <p>חשמל שאורו חזק שוב אין להדליק נרות</p>
                                </div>
                            </div>
                        </div>
                    </div>
                    <div class="sheet tight">
                        <div class="sheet-head"><b></b><b>א</b></div>
                        <div class="columns">
                            <div class="column">
                                <div class="para short"><p><b>שלמא</b></p></div>
                                <div class="para short">
                                    <p>יקירא</p>
                                    <p>המצוייני</p>
                                    <p>י״נ וידיו</p>
                                    <p>וצדקה</p>
                                    <p>אהרן רו</p>
                                    <p>וזהו</p>
                                </div>
                                <div class="para short"><p><b>אחרשה</b></p></div>
                                <div class="para short">
                                    <p><b>מה</b> מאי</p>
                                    <p class="in">תר</p>
                                    <p>באמת ה</p>
                                    <p>באמת מ</p>
                                    <p>מתוך הו</p>
                                </div>
                                <div class="para">
                                    <p><b>מה</b> דכתב שהא דרש״י כתב ערבית של</p>
                                    <p class="in">ליל שבת היינו בע״ש כי הא דנר</p>
                                    <p>שבת חובה היינו לפני שבת, כך הא</p>
                                    <p>דרחיצת פניו ידיו ורגליו ערבית היינו</p>
                                    <p>לפני שבת, דמה טעם לרחוץ בליל שבת</p>
                                    <p class="end">אחר שרחץ כל גופו ערב שבת.</p>
                                </div>
                                <div class="para">
                                    <p><b>הנה</b> הא דהדלקת נר דהוי חובה משום</p>
                                    <p class="in">שלום בית הוי העיקר שצריך שיהי׳</p>
                                    <p>דולק משך כל הסעודה שאין ענג</p>
                                    <p>באכילה בחושך וע״כ אמרו בלבד שלא</p>
                                    <p>יקדים יותר ההדלקה משום שאז איננו</p>
                                </div>
                            </div>
                            <div class="column">
                                <div class="para cut">
                                    <p>אום</p>
                                    <p>ליק</p>
                                    <p>ליו</p>
                                    <p>כום</p>
                                    <p>כום</p>
                                    <p>ה</p>
                                    <p>נה</p>
                                </div>
                                <div class="para cut">
                                    <p>קת</p>
                                    <p>רים</p>
                                    <p>אלא</p>
                                    <p>תי</p>
                                    <p>הו</p>
                                    <p>רב</p>
                                    <p>תני</p>
                                    <p>ז</p>
                                    <p>או</p>
                                    <p class="end">עונג שבת.</p>
                                </div>
                                <div class="para">
                                    <p><b>ובזה</b> אתי שפיר הא דקאמר כך הי׳</p>
                                    <p class="in">מנהגו של ר״י בר אלעאי ערב</p>
                                    <p>שבת היו מביאים לו עריבה מלאה חמין</p>
                                    <p>ורוחץ הגם שמעשה רב לגבי הלכה, מ״מ</p>
                                    <p>מאחר שרב אמר ואני אומר דרחיצת ידים</p>
                                    <p>ורגלים בחמין ערבית דהוי מצוה איך</p>
                                    <p>מביא לכך מהא דרב״י בר אלעאי שכך</p>
                                    <p>הי׳ מנהגו אלא מהא שהי׳ ר״י ב״א</p>
                                    <p>מדקדק שיביאו לו ספל מלא חמין וכו׳</p>
                                    <p>וישב בסדינין המצוייצין וכו׳ שהי׳</p>
                                </div>
                            </div>
                        </div>
                    </div>
                </article>
            </div>
        </div>
        <div class="scrollbar">
            <div class="split-box"></div>
            <button class="expand" aria-label="Expand"><svg viewBox="0 0 14 14"><path d="M5 2l5 5-5 5z"/></svg></button>
            <button class="sb" aria-label="Scroll up"><svg viewBox="0 0 14 14"><path d="M3 9l4-4 4 4" fill="none" stroke="#4d6185" stroke-width="2.200"/></svg></button>
            <div class="thumb"><svg viewBox="0 0 8 8"><path d="M0 .5h7M0 2.500h7M0 4.500h7M0 6.500h7" stroke="#8eaef0"/></svg></div>
            <div class="track"></div>
            <button class="sb" aria-label="Scroll down"><svg viewBox="0 0 14 14"><path d="M3 5l4 4 4-4" fill="none" stroke="#4d6185" stroke-width="2.200"/></svg></button>
        </div>
    </main>

    <footer class="statusbar">
        <div class="left">
            <button aria-label="Full screen"><svg viewBox="0 0 16 16"><path d="M.5 1.500h15v11H.5z" fill="#c9c9c2" stroke="#555"/><path d="M2 3h12v8H2z" fill="#111"/><path d="M5 3h6v8H5z" fill="#dde8f5"/><path d="M6 5h4M6 7h4M6 9h4" stroke="#345"/><path d="M4 14.500h8" stroke="#555" stroke-width="2"/></svg></button>
            <button aria-label="Hide toolbars"><svg viewBox="0 0 16 16"><path d="M1.500 1.500h13v13h-13z" fill="#fff" stroke="#888"/><path d="M1 5h14" stroke="#888"/><path d="M2 6h12v8H2z" fill="#dbe3f0"/><path d="M5 9.500h6" stroke="#334a80" stroke-width="1.500"/></svg></button>
        </div>
        <div class="pager">
            <button aria-label="First page"><svg viewBox="0 0 18 16"><path d="M1 1h4v14H1z" fill="#b5b4ab"/><path d="M15 1v14L7 8z" fill="url(#gGray)" stroke="#aaa99f"/></svg></button>
            <button aria-label="Previous page"><svg viewBox="0 0 18 16"><path d="M13 1v14L5 8z" fill="url(#gGray)" stroke="#aaa99f"/></svg></button>
            <input type="text" value="1 of 5" aria-label="Page">
            <button aria-label="Next page"><svg viewBox="0 0 18 16"><path d="M5 1v14l8-7z" fill="url(#gNav)" stroke="#5a8ec4"/></svg></button>
            <button aria-label="Last page"><svg viewBox="0 0 18 16"><path d="M2 1v14l8-7z" fill="url(#gNav)" stroke="#4078b4"/><path d="M12 1h4v14h-4z" fill="#3f7fbf"/></svg></button>
            <span class="split"></span>
            <button aria-label="Previous view"><svg viewBox="0 0 16 16"><circle cx="8" cy="8" r="7.500" fill="#4e8a35" stroke="#2f5f1c"/><path d="M3 8l5-4v3h5v2H8v3z" fill="#fff"/></svg></button>
            <button aria-label="Next view"><svg viewBox="0 0 16 16"><circle cx="8" cy="8" r="7.500" fill="#b9b8b0" stroke="#a3a29a"/><path d="M13 8L8 4v3H3v2h5v3z" fill="#fff"/></svg></button>
        </div>
        <div class="layouts">
            <button class="on" aria-label="Single page"><svg viewBox="0 0 16 16"><path d="M2.500.5h12v15h-12z" fill="url(#gBlue)" stroke="#6d8fbf"/></svg></button>
            <button aria-label="Continuous"><svg viewBox="0 0 16 16"><path d="M2.500 0v6.500h12V0M2.500 16V9.500h12V16" fill="url(#gBlue)" stroke="#6d8fbf"/></svg></button>
            <button aria-label="Continuous facing"><svg viewBox="0 0 16 16"><path d="M1.500 0v6.500h5V0M9.500 0v6.500h5V0M1.500 16V9.500h5V16M9.500 16V9.500h5V16" fill="url(#gBlue)" stroke="#6d8fbf"/></svg></button>
            <button aria-label="Facing"><svg viewBox="0 0 16 16"><path d="M.5 2.500h6v11h-6zM9.500 2.500h6v11h-6z" fill="url(#gBlue)" stroke="#7d9fcf"/></svg></button>
        </div>
    </footer>
    <script src="rulers.js"></script>
</body>
</html>
```

FILE: styles.css
```
* {
    box-sizing: border-box;
}
body {
    margin: 0;
    height: 100vh;
    display: flex;
    flex-direction: column;
    overflow: hidden;
    background-color: #ece9d8;
    font-family: "DejaVu Sans Condensed", Tahoma, sans-serif;
    font-size: 11px;
    color: #000;
}
button {
    padding: 0;
    border: none;
    background: none;
    font: inherit;
    color: inherit;
}
ul {
    list-style: none;
    margin: 0;
    padding: 0;
}
svg {
    display: block;
    flex: none;
}
.sprite {
    position: absolute;
    width: 0;
    height: 0;
}

/* Title bar */
.titlebar {
    height: 25px;
    flex: none;
    display: flex;
    align-items: center;
    padding: 0 2px 0 3px;
    background: linear-gradient(#2f8cff 0, #0a62ee 3px, #0054e3 8px, #0560fa 18px, #0060fc 21px, #0046cc 25px);
    color: #fff;
}
.titlebar h1 {
    flex: 1;
    margin: 0 0 0 5px;
    font: bold 14px "Noto Sans", "DejaVu Sans", sans-serif;
    line-height: 20px;
    text-shadow: 1px 1px #0a2f8c;
}
.titlebar h1 span {
    font-weight: normal;
    font-family: "DejaVu Sans", sans-serif;
}
.app-icon {
    width: 14px;
    height: 14px;
}
.window-buttons {
    display: flex;
    gap: 2px;
}
.window-buttons button {
    width: 21px;
    height: 21px;
    border: 1px solid #fff;
    border-radius: 3px;
    background: linear-gradient(135deg, #7ba3f5, #2a62dc 40%, #1c4fcf);
}
.window-buttons .close {
    background: linear-gradient(135deg, #f0a08a, #dc5030 40%, #c63a18);
}
.window-buttons svg {
    width: 19px;
    height: 19px;
}

/* Menu bar */
.menubar {
    height: 20px;
    flex: none;
    display: flex;
    border-bottom: 1px solid #fff;
}
.doc-icon {
    width: 16px;
    height: 17px;
    margin: 1px 0 0 4px;
}
.menus {
    flex: 1;
    display: flex;
}
.menus > li {
    position: relative;
}
.menus > li > button {
    height: 19px;
    padding: 0 5px;
}
.menus > .open > button {
    background-color: #316ac5;
    color: #fff;
}
.menus > .open ~ li > button {
    padding: 0 6px;
}
.child-buttons {
    display: flex;
    gap: 2px;
    padding: 1px 1px 0 0;
}
.child-buttons button {
    width: 17px;
    height: 17px;
    background-color: #f6f5ee;
}
.child-buttons svg {
    width: 16px;
    height: 16px;
}
.menu {
    position: absolute;
    z-index: 5;
    padding: 2px;
    background-color: #fff;
    border: 1px solid #aca899;
    box-shadow: 3px 3px 3px rgba(0, 0, 0, 0.5);
}
.menu li {
    position: relative;
}
.menu li > button {
    width: 100%;
    height: 22px;
    display: flex;
    align-items: center;
    border: 1px solid transparent;
    padding: 0 0 0 22px;
    white-space: nowrap;
    text-align: left;
}
.menu .selected > button {
    background-color: #b9ccea;
    border-color: #316ac5;
}
.tools-menu {
    top: 19px;
    left: 0;
    width: 165px;
}
.tools-menu > li::after {
    content: "";
    position: absolute;
    right: 6px;
    top: 5px;
    border-left: 4px solid #000;
    border-top: 4px solid transparent;
    border-bottom: 4px solid transparent;
}
.tools-menu > .selected::after {
    border-left-color: #fff;
}
.submenu {
    left: 156px;
    top: -3px;
    width: 233px;
}
.submenu li > button {
    gap: 2px;
    padding: 0;
}
.submenu li > .plain {
    display: block;
    padding-left: 22px;
}
.submenu svg {
    width: 20px;
    height: 20px;
}
.submenu .line {
    height: 6px;
    padding-top: 3px;
}
.submenu .line::before {
    content: "";
    display: block;
    height: 1px;
    background-color: #aca899;
}
.t-glyph {
    font: bold 12px "Liberation Serif", serif;
}

/* Toolbars */
.toolbars {
    flex: none;
    padding-bottom: 1px;
    border-bottom: 1px solid #aca899;
}
.toolbar-row {
    display: flex;
    height: 32px;
    border-top: 1px solid #aca899;
    background-color: #ece9d8;
}
.band {
    display: flex;
    align-items: center;
    border-right: 1px solid #aca899;
    border-left: 1px solid #fff;
    border-bottom: 1px solid #d4d0c0;
    padding-left: 8px;
    position: relative;
}
.band::before {
    content: "";
    position: absolute;
    left: 3px;
    top: 6px;
    bottom: 6px;
    width: 3px;
    background: repeating-linear-gradient(#9c9a8c 0, #9c9a8c 1px, transparent 1px, transparent 2px);
}
.band button {
    width: 32px;
    height: 28px;
    display: flex;
    align-items: center;
    justify-content: center;
    flex: none;
}
.band svg {
    width: 22px;
    height: 22px;
}
.band .small {
    width: 17px;
    height: 17px;
}
.band .arrow {
    width: 5px;
    height: 3px;
}
.band .drop {
    width: 35px;
    gap: 6px;
}
.band .label-button {
    width: auto;
    gap: 4px;
    padding: 0 5px 0 4px;
}
.band .create {
    flex: 1;
    justify-content: flex-end;
    gap: 6px;
}
.band .select-tool {
    gap: 2px;
}
.label-button svg {
    width: 20px;
    height: 20px;
}
.file-band {
    width: 608px;
}
.file-band .drop {
    width: 37px;
}
.zoom-band {
    width: 268px;
}
.dim svg {
    opacity: 0.5;
}
.split {
    width: 2px;
    height: 27px;
    margin: 0 2px 0 0;
    border-left: 1px solid #aca899;
    border-right: 1px solid #fff;
}
.letter {
    width: 17px;
    font: bold 17px "Liberation Serif", serif;
    color: #5c1a8e;
}
.band .yahoo {
    font: bold 18px "Liberation Serif", serif;
    color: #d8101c;
}
.q-glyph {
    font: bold 13px "Liberation Sans", sans-serif;
    fill: #fff;
}
.c-purple { color: #5c1a8e; }
.c-green { color: #18b02c; }
.c-orange { color: #e08a1c; }
.c-teal { color: #0d8c88; }
.c-blue { color: #1c2cd0; }
.c-white { color: #fff; }
.c-yellow { color: #fff2a0; }
.c-lime { color: #a6e6a0; }
.c-steel { color: #8ab4cc; }
.c-rose { color: #e08a94; }

/* Workspace */
.workspace {
    flex: 1;
    min-height: 0;
    display: flex;
}
.side-tabs {
    width: 20px;
    display: flex;
    flex-direction: column;
    padding: 4px 0 40px 2px;
    background-color: #c4c0b0;
    border-right: 1px solid #716f64;
    border-top: 1px solid #716f64;
}
.side-tabs button {
    flex: none;
    padding: 1px 0 1px 1px;
    margin-top: -8px;
    background-color: #55534a;
    clip-path: polygon(0 17px, 17px 0, 100% 0, 100% 100%, 0 100%);
    position: relative;
}
.side-tabs button:first-child,
.side-tabs .first {
    margin-top: 0;
}
.side-tabs span {
    display: block;
    padding: 22px 1px 17px 0;
    background-color: #ece9d8;
    clip-path: polygon(0 17px, 17px 0, 100% 0, 100% 100%, 0 100%);
    writing-mode: sideways-lr;
    font: 11px "Liberation Sans", Arial, sans-serif;
    line-height: 16px;
}
.side-tabs button::after {
    content: "";
    position: absolute;
    left: 1px;
    right: 0;
    bottom: 0;
    height: 5px;
    border-bottom: 2px solid #716f64;
    background: repeating-linear-gradient(90deg, #b5b1a1 0, #b5b1a1 2px, #fff 2px, #fff 3px);
}
.side-tabs .active {
    z-index: 2;
}
.side-tabs .over {
    z-index: 1;
}
.side-tabs .active span {
    padding: 18px 1px 13px 0;
    font-weight: bold;
}
.push {
    flex: 1;
}
.splitter {
    width: 7px;
    border-right: 1px solid #716f64;
    background-color: #ece9d8;
}
.view {
    flex: 1;
    min-width: 0;
    display: grid;
    grid-template-columns: 16px 1fr;
    grid-template-rows: 17px 1fr;
}
.corner {
    background-color: #ece9d8;
    border-top: 1px solid #716f64;
}
.ruler-h {
    width: 100%;
    height: 17px;
    background-color: #fff;
    border-top: 1px solid #716f64;
    border-bottom: 1px solid #000;
    border-left: 1px solid #000;
}
.ruler-v {
    width: 16px;
    height: 100%;
    background-color: #fff;
    border-top: 1px solid #000;
    border-right: 1px solid #000;
}
.ruler-h text,
.ruler-v text {
    font: 11px "Liberation Sans", Arial, sans-serif;
}
.ruler-h path,
.ruler-v path {
    stroke: #000;
    shape-rendering: crispEdges;
}
.ruler-h .cursor,
.ruler-v .cursor {
    stroke: #888;
}
.canvas {
    display: flex;
    min-height: 0;
    padding: 18px 12px 18px 11px;
    background-color: #cbc7b6;
}
.page {
    flex: 1;
    display: flex;
    justify-content: center;
    gap: 38px;
    padding: 195px 0 0 37px;
    background-color: #fff;
    border: 1px solid #000;
    border-top-color: #716f64;
    border-left-color: #716f64;
    box-shadow: 1px 1px 1px #444;
    font-family: "Liberation Serif", "Times New Roman", serif;
    font-size: 9px;
    overflow: hidden;
}
.sheet {
    width: 268px;
}
.sheet-head {
    display: flex;
    justify-content: space-between;
    align-items: center;
    height: 18px;
    margin-bottom: 16px;
    padding-left: 56px;
}
.tight .sheet-head {
    padding-left: 0;
}
.sheet-head b {
    font-size: 13px;
}
.columns {
    display: flex;
    align-items: flex-end;
    justify-content: space-between;
    height: 381px;
}
.column {
    width: 128px;
}
.para {
    margin-bottom: 15px;
}
.tight .para {
    margin-bottom: 12px;
}
.column .para:last-child {
    margin-bottom: 0;
}
.para p {
    margin: 0;
    line-height: 11px;
    height: 11px;
    white-space: nowrap;
    text-align: justify;
    text-align-last: justify;
}
.para b {
    font-size: 10px;
}
.para small {
    font-size: 7px;
}
.para .in {
    padding-right: 20px;
}
.para .mid {
    padding-right: 28px;
}
.para .wide {
    padding-right: 36px;
}
.para .widest {
    padding-right: 46px;
}
.para .end {
    text-align-last: center;
}
.short p {
    text-align-last: right;
}
.cut p {
    text-align-last: left;
}

/* Scroll bar */
.scrollbar {
    width: 17px;
    display: flex;
    flex-direction: column;
    padding-left: 1px;
    background-color: #f7f6f1;
}
.split-box {
    height: 8px;
    background-color: #ece9d8;
    border-bottom: 1px solid #aca899;
}
.expand {
    height: 17px;
    background-color: #ece9d8;
    border-right: 1px solid #aca899;
    border-bottom: 1px solid #aca899;
}
.scrollbar button svg {
    width: 14px;
    height: 14px;
}
.sb {
    height: 16px;
    border: 1px solid #b4c8f6;
    border-radius: 2px;
    background-color: #c6d5fd;
}
.thumb {
    height: 160px;
    display: flex;
    align-items: center;
    justify-content: center;
    border: 1px solid #98b4ee;
    border-radius: 2px;
    background: linear-gradient(90deg, #cddcff, #bacbf9);
}
.thumb svg {
    width: 8px;
    height: 8px;
}
.track {
    flex: 1;
}

/* Status bar */
.statusbar {
    flex: none;
    height: 25px;
    display: grid;
    grid-template-columns: 1fr auto 1fr;
    align-items: center;
    border-top: 1px solid #aca899;
}
.statusbar button {
    width: 32px;
    height: 22px;
    display: flex;
    align-items: center;
    justify-content: center;
}
.statusbar svg {
    width: 16px;
    height: 16px;
}
.left {
    display: flex;
    padding-left: 3px;
}
.pager {
    display: flex;
    align-items: center;
    height: 24px;
    padding: 0 4px;
    border-left: 1px solid #aca899;
    border-right: 1px solid #aca899;
}
.pager svg {
    width: 18px;
}
.pager input {
    width: 74px;
    height: 21px;
    border: 1px solid #7f9db9;
    background-color: #fff;
    font: inherit;
    text-align: center;
}
.pager .split {
    height: 24px;
    margin: 0 4px;
}
.layouts {
    display: flex;
    justify-content: flex-end;
    padding-right: 3px;
}
.layouts .on {
    border: 1px solid #8ba4cc;
    border-radius: 3px;
    background-color: #fff;
}
```

FILE: rulers.js
```
// Rulers: one unit is 57.6px, each unit has 8 divisions
const UNIT = 57.6;

function tickPath(count, start, length, horizontal) {
    let d = '';
    for (let i = -1; i < count * 8; i++) {
        const pos = start + Math.round(i * UNIT / 8);
        let size = 3;
        if (i % 8 === 0) size = length;
        else if (i % 4 === 0) size = 6;
        d += horizontal ? `M${pos}.5 ${length}v-${size}` : `M${length} ${pos}.5h-${size}`;
    }
    return d;
}

function label(x, y, text) {
    return `<text x="${x}" y="${y}">${text}</text>`;
}

let across = `<path d="${tickPath(21, 11, 15, true)}"/><path class="cursor" d="M438.5 0v15"/>`;
for (let n = 0; n <= 20; n++) {
    across += label(11 + Math.round(n * UNIT) + 2, 9, n);
}
document.getElementById('ruler-h').innerHTML = across;

let down = `<path d="${tickPath(15, 18, 15, false)}"/><path class="cursor" d="M0 81.5h15"/>`;
for (let n = 0; n <= 14; n++) {
    // digits of a number are stacked
    String(n).split('').forEach((digit, i) => {
        down += label(2, 18 + Math.round(n * UNIT) + 10 + i * 11, digit);
    });
}
document.getElementById('ruler-v').innerHTML = down;
```
